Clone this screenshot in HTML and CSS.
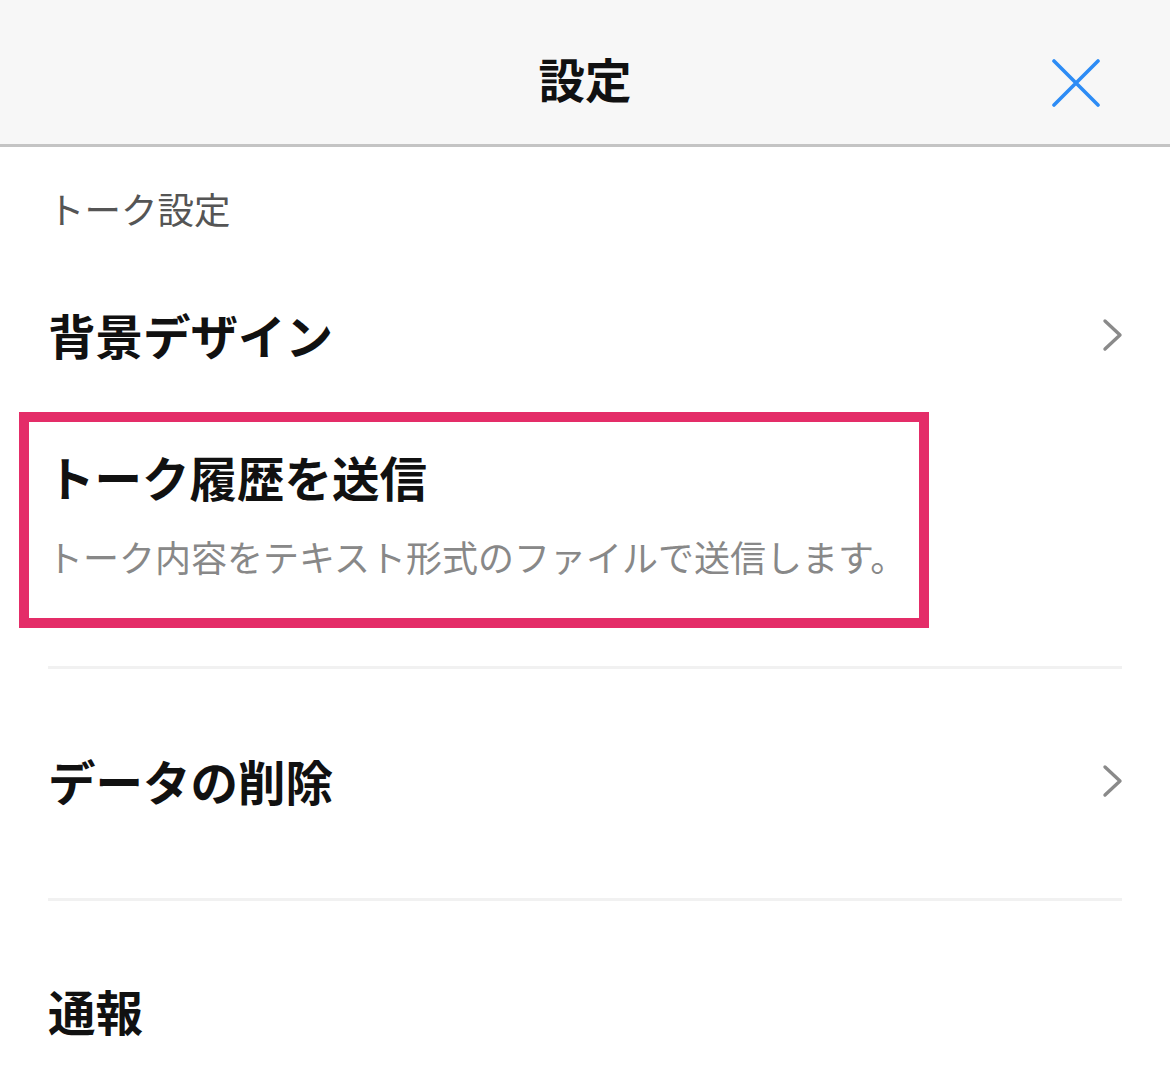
FILE: index.html
```html
<!DOCTYPE html>
<html lang="ja">
<head>
<meta charset="utf-8">
<title>設定</title>
<link rel="stylesheet" href="styles.css">
</head>
<body>
<header class="topbar">
  <div class="spacer"></div>
  <h1 class="title">設定</h1>
  <button class="close" aria-label="閉じる">
    <svg width="48" height="48" viewBox="0 0 48 48"><path d="M2 2 L46 46 M46 2 L2 46" stroke="#2d8cf5" stroke-width="3.6" stroke-linecap="round" fill="none"/></svg>
  </button>
</header>
<main class="content">
  <div class="section-label">トーク設定</div>
  <div class="row row-bg">
    <span class="row-title">背景デザイン</span>
    <svg class="chev" width="22" height="34" viewBox="0 0 22 34"><path d="M3 3 L18 17 L3 31" stroke="#8a8a8a" stroke-width="3.4" stroke-linecap="round" stroke-linejoin="round" fill="none"/></svg>
  </div>
  <div class="highlight">
    <div class="row-title">トーク履歴を送信</div>
    <div class="row-desc">トーク内容をテキスト形式のファイルで送信します。</div>
  </div>
  <div class="sep sep-first"></div>
  <div class="row row-tall">
    <span class="row-title">データの削除</span>
    <svg class="chev" width="22" height="34" viewBox="0 0 22 34"><path d="M3 3 L18 17 L3 31" stroke="#8a8a8a" stroke-width="3.4" stroke-linecap="round" stroke-linejoin="round" fill="none"/></svg>
  </div>
  <div class="sep"></div>
  <div class="row row-tall row-last">
    <span class="row-title">通報</span>
  </div>
</main>
</body>
</html>
```
FILE: styles.css
```css
* { box-sizing: border-box; }
html, body { margin: 0; padding: 0; background: #fff; }
body {
  font-family: "Noto Sans CJK JP", "Noto Sans", sans-serif;
  color: #111;
  overflow: hidden;
}
.topbar {
  height: 147px;
  background: #f7f7f7;
  border-bottom: 3px solid #c4c4c4;
  display: grid;
  grid-template-columns: 1fr auto 1fr;
  align-items: center;
}
.title {
  margin: 0;
  font-size: 46.5px;
  font-weight: 700;
  line-height: 60px;
  color: #111;
  padding-top: 12px;
}
.close {
  justify-self: end;
  margin-right: 70px;
  margin-top: 22px;
  background: none;
  border: 0;
  padding: 0;
  width: 48px;
  height: 48px;
  display: flex;
}
.content {
  padding: 0 48px;
}
.section-label {
  margin-top: 37px;
  font-size: 36.5px;
  line-height: 50px;
  color: #555;
  margin-bottom: 24px;
}
.row {
  display: flex;
  align-items: center;
  justify-content: space-between;
}
.row-bg { height: 154px; }
.row-tall { height: 229px; padding-bottom: 5px; }
.row-last { padding-bottom: 9px; }
.row-title {
  font-size: 47.5px;
  font-weight: 700;
  line-height: 60px;
  color: #111;
}
.chev { margin-right: -2px; }
.highlight {
  margin-left: -29px;
  width: 910px;
  height: 216px;
  border: 10px solid #e42d68;
  padding: 25px 0 0 18px;
}
.highlight .row-desc {
  margin-top: 24px;
  font-size: 36px;
  line-height: 50px;
  color: #888;
}
.sep {
  height: 3px;
  background: #f1f1f1;
}
.sep-first { margin-top: 38px; }
```
